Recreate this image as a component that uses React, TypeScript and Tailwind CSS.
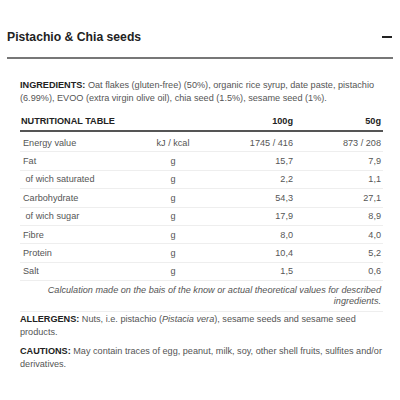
const rows = [
  { name: "Energy value", unit: "kJ / kcal", a: "1745 / 416", b: "873 / 208" },
  { name: "Fat", unit: "g", a: "15,7", b: "7,9" },
  { name: " of wich saturated", unit: "g", a: "2,2", b: "1,1" },
  { name: "Carbohydrate", unit: "g", a: "54,3", b: "27,1" },
  { name: " of wich sugar", unit: "g", a: "17,9", b: "8,9" },
  { name: "Fibre", unit: "g", a: "8,0", b: "4,0" },
  { name: "Protein", unit: "g", a: "10,4", b: "5,2" },
  { name: "Salt", unit: "g", a: "1,5", b: "0,6" },
];

export default function App() {
  return (
    <div className="w-[400px] h-[400px] bg-white font-['Liberation_Sans',Arial,sans-serif] text-[#555]">
      <div className="pt-[27px] px-[7px]">
        <div className="flex items-center justify-between h-[20px] border-b-2 border-[#777] pb-[10px] box-content">
          <h2 className="text-[12.2px] font-bold text-[#222] leading-[20px]">Pistachio &amp; Chia seeds</h2>
          <span className="block w-[10px] h-[2px] bg-[#222] mr-[1px]" />
        </div>
      </div>

      <div className="px-[20px] pt-[20px] text-[9.15px] leading-[13px] whitespace-nowrap">
        <p>
          <b className="text-[#222]">INGREDIENTS:</b> Oat flakes (gluten-free) (50%), organic rice syrup, date paste, pistachio
          <br />
          (6.99%), EVOO (extra virgin olive oil), chia seed (1.5%), sesame seed (1%).
        </p>

        <div className="mt-[7px] w-[363px]">
          <div className="grid grid-cols-[110px_86px_80px_87px] border-b-2 border-[#555] h-[20px] items-center font-bold text-[#222]">
            <span className="pl-[1px]">NUTRITIONAL TABLE</span>
            <span />
            <span className="text-right pr-[3px]">100g</span>
            <span className="text-right pr-[2px]">50g</span>
          </div>
          <div className="pt-[2px]">
            {rows.map((r) => (
              <div
                key={r.name}
                className="grid grid-cols-[110px_86px_80px_87px] h-[18.4px] pt-[1px] items-center border-b border-[#eee] whitespace-pre"
              >
                <span className="pl-[3px]">{r.name}</span>
                <span className="text-center">{r.unit}</span>
                <span className="text-right pr-[3px]">{r.a}</span>
                <span className="text-right pr-[2px]">{r.b}</span>
              </div>
            ))}
          </div>
          <p className="italic text-right pr-[2px] pt-[4px] pb-[4px] leading-[11px] border-b border-[#eee]">
            Calculation made on the bais of the know or actual theoretical values for described
            <br />
            ingredients.
          </p>
        </div>

        <p className="mt-[1px]">
          <b className="text-[#222]">ALLERGENS:</b> Nuts, i.e. pistachio (<i>Pistacia vera</i>), sesame seeds and sesame seed
          <br />
          products.
        </p>
        <p className="mt-[6px]">
          <b className="text-[#222]">CAUTIONS:</b> May contain traces of egg, peanut, milk, soy, other shell fruits, sulfites and/or
          <br />
          derivatives.
        </p>
      </div>
    </div>
  );
}
